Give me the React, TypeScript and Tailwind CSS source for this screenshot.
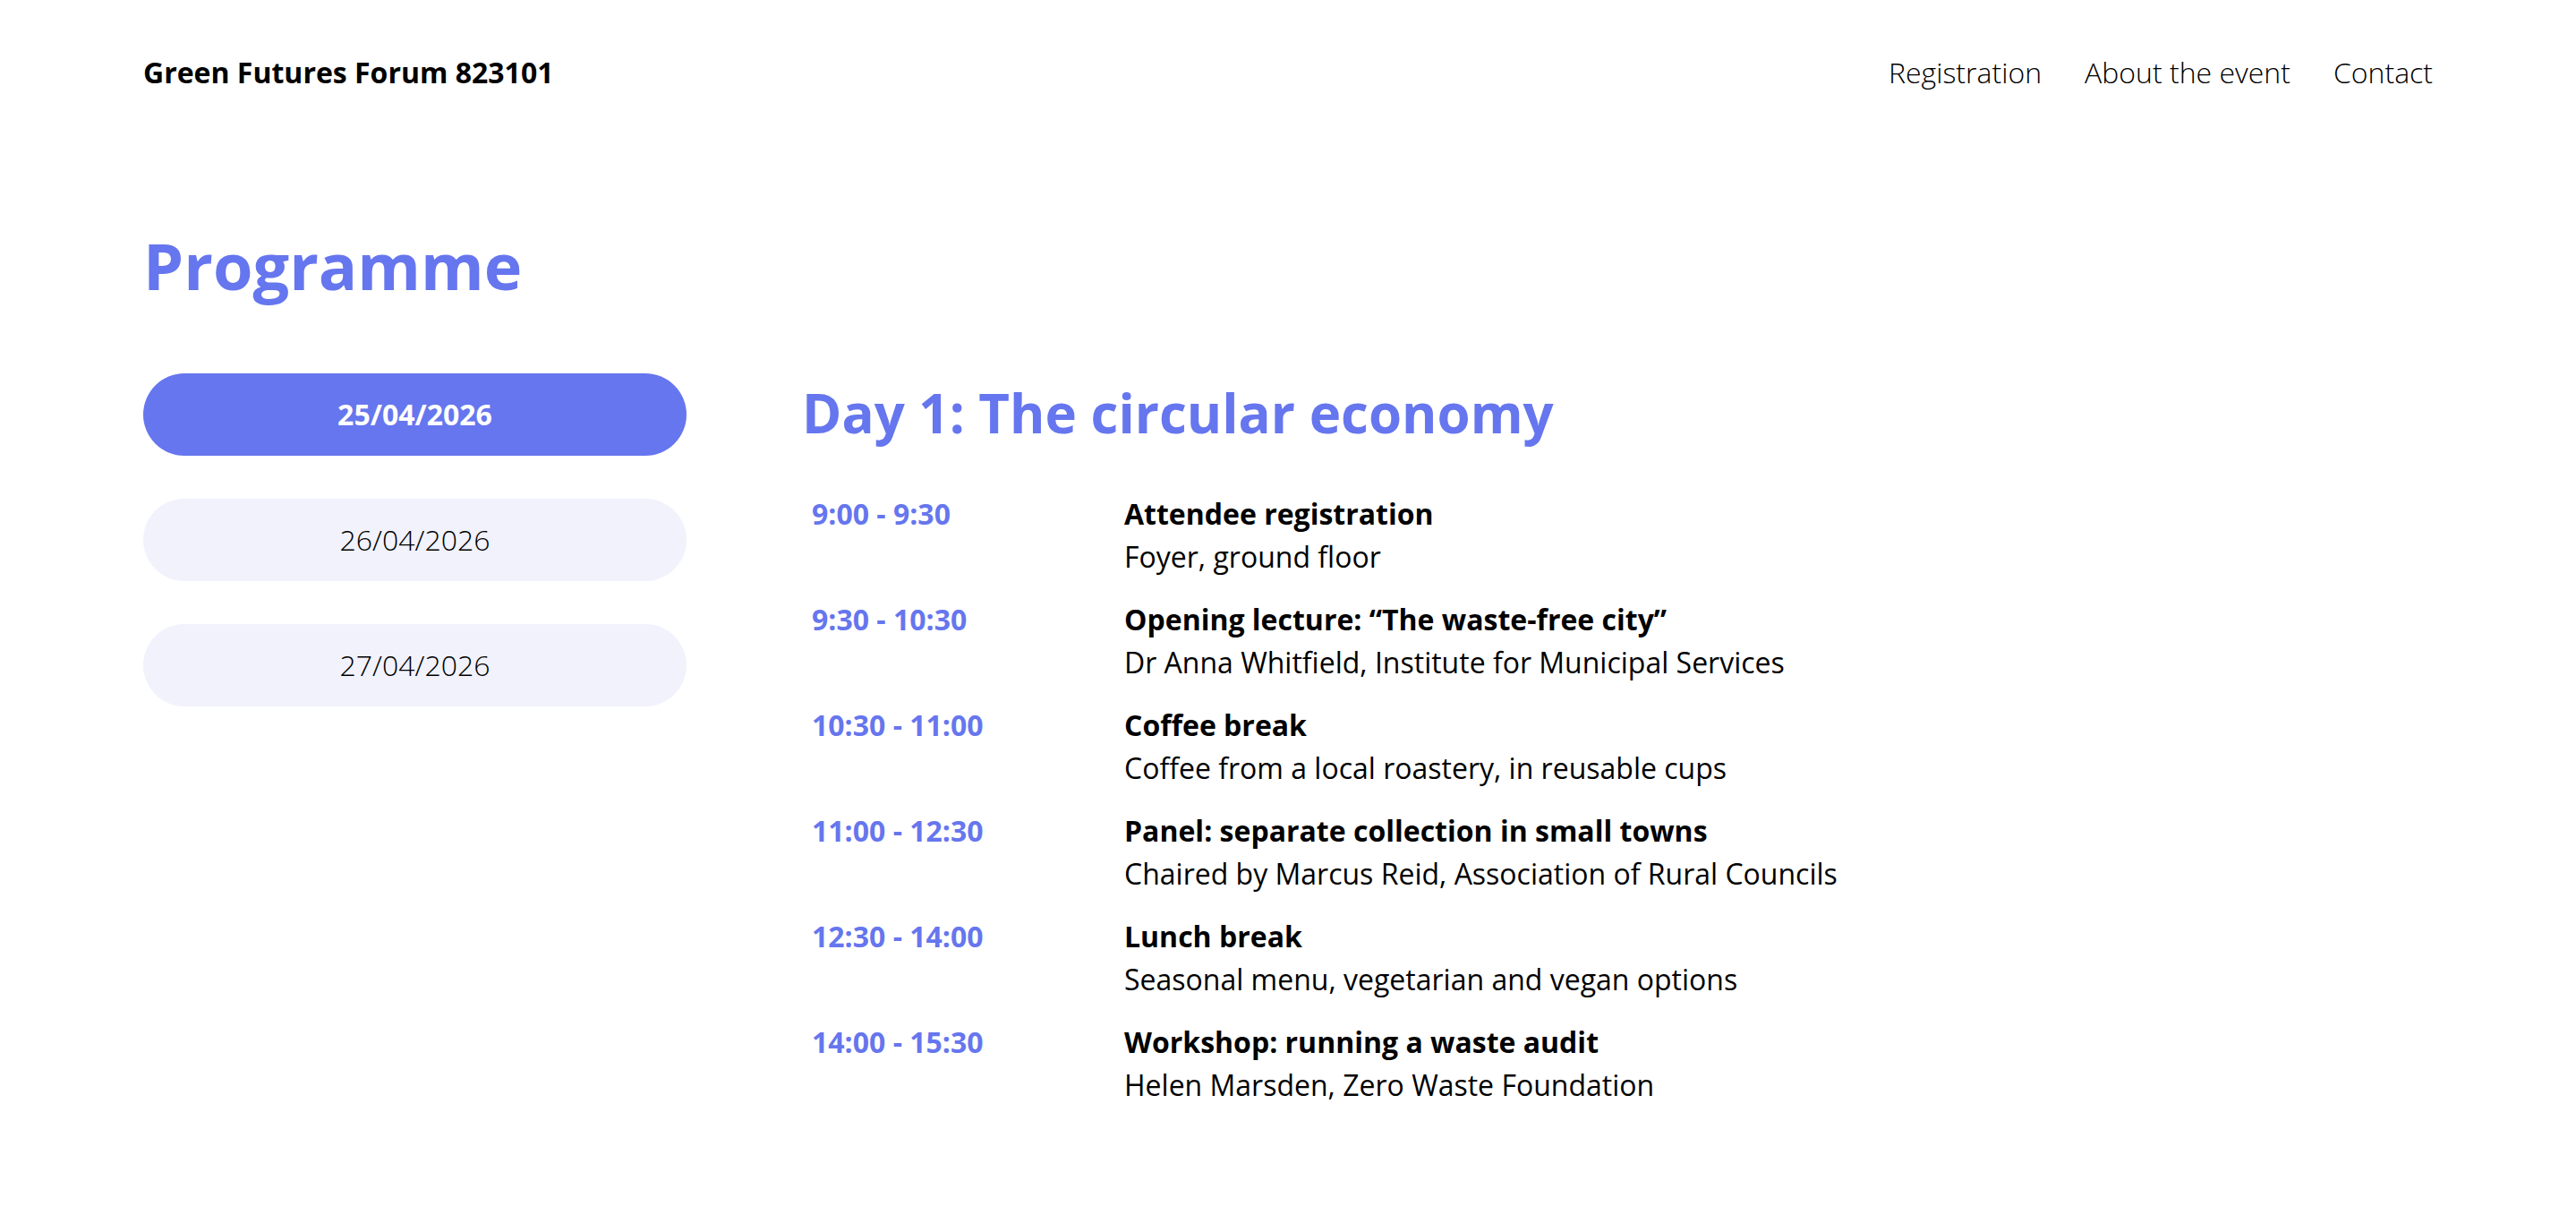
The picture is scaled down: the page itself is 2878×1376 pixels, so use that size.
import React from "react";

const rows = [
  { time: "9:00 - 9:30", title: "Attendee registration", sub: "Foyer, ground floor" },
  { time: "9:30 - 10:30", title: "Opening lecture: \u201cThe waste-free city\u201d", sub: "Dr Anna Whitfield, Institute for Municipal Services" },
  { time: "10:30 - 11:00", title: "Coffee break", sub: "Coffee from a local roastery, in reusable cups" },
  { time: "11:00 - 12:30", title: "Panel: separate collection in small towns", sub: "Chaired by Marcus Reid, Association of Rural Councils" },
  { time: "12:30 - 14:00", title: "Lunch break", sub: "Seasonal menu, vegetarian and vegan options" },
  { time: "14:00 - 15:30", title: "Workshop: running a waste audit", sub: "Helen Marsden, Zero Waste Foundation" },
];

export default function App() {
  return (
    <div className="min-h-screen bg-white text-black font-['Open_Sans',sans-serif]">
      <header className="flex h-[162px] items-center justify-between px-[160px]">
        <div className="text-[32px] font-bold">Green Futures Forum 823101</div>
        <nav className="flex gap-[48px] text-[32px] font-light text-black">
          <a>Registration</a>
          <a>About the event</a>
          <a>Contact</a>
        </nav>
      </header>
      <main className="px-[160px]">
        <h1 className="mt-[90px] text-[72px] font-bold leading-[88px] text-[#6676ee]">Programme</h1>
        <div className="mt-[77px] flex gap-[129px]">
          <div className="flex w-[607px] flex-col gap-[48px]">
            <button className="h-[92px] rounded-full bg-[#6676ee] text-[32px] font-bold text-white">25/04/2026</button>
            <button className="h-[92px] rounded-full bg-[#f1f2fc] text-[32px] font-light text-black">26/04/2026</button>
            <button className="h-[92px] rounded-full bg-[#f1f2fc] text-[32px] font-light text-black">27/04/2026</button>
          </div>
          <div className="flex-1">
            <h2 className="mt-[6px] text-[60px] font-bold leading-[76px] text-[#6676ee]">Day 1: The circular economy</h2>
            <div className="mt-[40px] flex flex-col">
              {rows.map((r) => (
                <div key={r.time} className="grid grid-cols-[349px_1fr] text-[32px] leading-[48px]">
                  <div className="px-[11px] py-[11px] font-bold text-[#6676ee]">{r.time}</div>
                  <div className="px-[11px] py-[11px]">
                    <div className="font-bold">{r.title}</div>
                    <div>{r.sub}</div>
                  </div>
                </div>
              ))}
            </div>
          </div>
        </div>
      </main>
    </div>
  );
}
